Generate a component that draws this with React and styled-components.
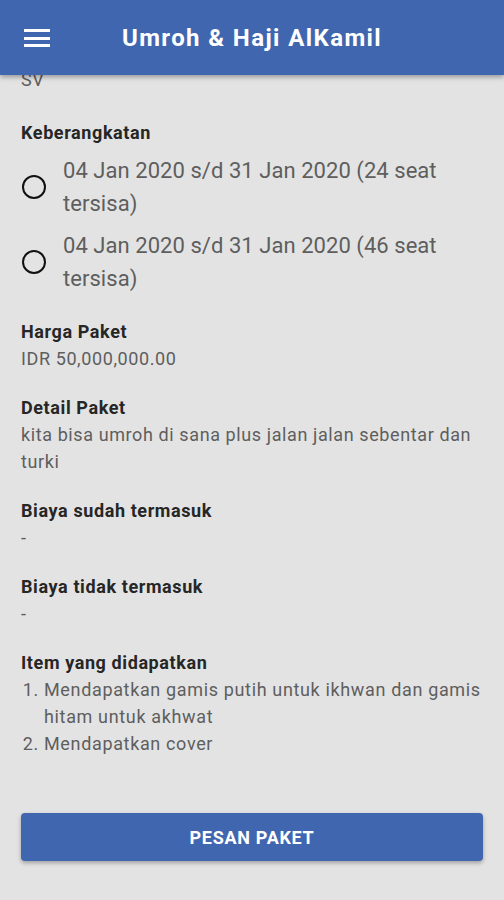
import React from "react";
import styled, { createGlobalStyle } from "styled-components";

const GlobalStyle = createGlobalStyle`
  html, body {
    margin: 0;
    padding: 0;
    background: #e3e3e3;
    font-family: Roboto, "Liberation Sans", sans-serif;
  }
`;

const Page = styled.div`
  width: 504px;
  height: 900px;
  overflow: hidden;
  background: #e3e3e3;
`;

const AppBar = styled.header`
  position: relative;
  z-index: 2;
  height: 75px;
  background: #4166b0;
  display: grid;
  grid-template-columns: 1fr auto 1fr;
  align-items: center;
  box-shadow: 0 2px 5px rgba(0, 0, 0, 0.35);
`;

const MenuButton = styled.div`
  padding-left: 24px;
  display: flex;
  flex-direction: column;
  gap: 4.5px;
  margin-top: 1px;

  span {
    display: block;
    width: 26px;
    height: 3px;
    background: #fff;
  }
`;

const Title = styled.h1`
  margin: 0;
  color: #fff;
  font-size: 24px;
  font-weight: 700;
  letter-spacing: 1.4px;
`;

const Content = styled.main`
  margin-top: -9px;
  padding: 0 21px;
`;

const Section = styled.section`
  margin-bottom: ${(p) => p.$gap || 22}px;
`;

const Label = styled.div`
  font-size: 18px;
  line-height: 27px;
  font-weight: 700;
  color: #262626;
  letter-spacing: 0.6px;
`;

const Value = styled.div`
  font-size: 18px;
  line-height: 27px;
  color: #5e5e5e;
  letter-spacing: 0.6px;
`;

const Options = styled.div`
  display: flex;
  flex-direction: column;
  gap: 9px;
  margin-top: 8px;
`;

const Option = styled.label`
  display: flex;
  align-items: center;
  gap: 17px;
`;

const Radio = styled.span`
  flex: none;
  width: 20px;
  height: 20px;
  border: 2.5px solid #111;
  border-radius: 50%;
  margin-left: 1px;
`;

const OptionText = styled.span`
  font-size: 22px;
  line-height: 33px;
  color: #5e5e5e;
  letter-spacing: 0.05px;
`;

const ItemList = styled.ol`
  margin: 0 -6px 0 0;
  padding-left: 23px;
  font-size: 18px;
  line-height: 27px;
  color: #5e5e5e;
  letter-spacing: 0.65px;
`;

const OrderButton = styled.button`
  display: block;
  width: 100%;
  height: 48px;
  margin-top: 56px;
  border: none;
  border-radius: 4px;
  background: #4166b0;
  color: #fff;
  font-family: Roboto, "Liberation Sans", sans-serif;
  font-size: 18px;
  font-weight: 700;
  letter-spacing: 0.7px;
  box-shadow: 0 2px 4px rgba(0, 0, 0, 0.3);
`;

const departures = [
  "04 Jan 2020 s/d 31 Jan 2020 (24 seat tersisa)",
  "04 Jan 2020 s/d 31 Jan 2020 (46 seat tersisa)",
];

const items = [
  "Mendapatkan gamis putih untuk ikhwan dan gamis hitam untuk akhwat",
  "Mendapatkan cover",
];

export default function App() {
  return (
    <Page>
      <GlobalStyle />
      <AppBar>
        <MenuButton>
          <span />
          <span />
          <span />
        </MenuButton>
        <Title>Umroh &amp; Haji AlKamil</Title>
        <div />
      </AppBar>
      <Content>
        <Section $gap={26}>
          <Value>SV</Value>
        </Section>
        <Section $gap={23}>
          <Label>Keberangkatan</Label>
          <Options>
            {departures.map((d, i) => (
              <Option key={i}>
                <Radio />
                <OptionText>{d}</OptionText>
              </Option>
            ))}
          </Options>
        </Section>
        <Section>
          <Label>Harga Paket</Label>
          <Value>IDR 50,000,000.00</Value>
        </Section>
        <Section>
          <Label>Detail Paket</Label>
          <Value>kita bisa umroh di sana plus jalan jalan sebentar dan turki</Value>
        </Section>
        <Section>
          <Label>Biaya sudah termasuk</Label>
          <Value>-</Value>
        </Section>
        <Section>
          <Label>Biaya tidak termasuk</Label>
          <Value>-</Value>
        </Section>
        <Section>
          <Label>Item yang didapatkan</Label>
          <ItemList>
            {items.map((it, i) => (
              <li key={i}>{it}</li>
            ))}
          </ItemList>
          <OrderButton>PESAN PAKET</OrderButton>
        </Section>
      </Content>
    </Page>
  );
}
